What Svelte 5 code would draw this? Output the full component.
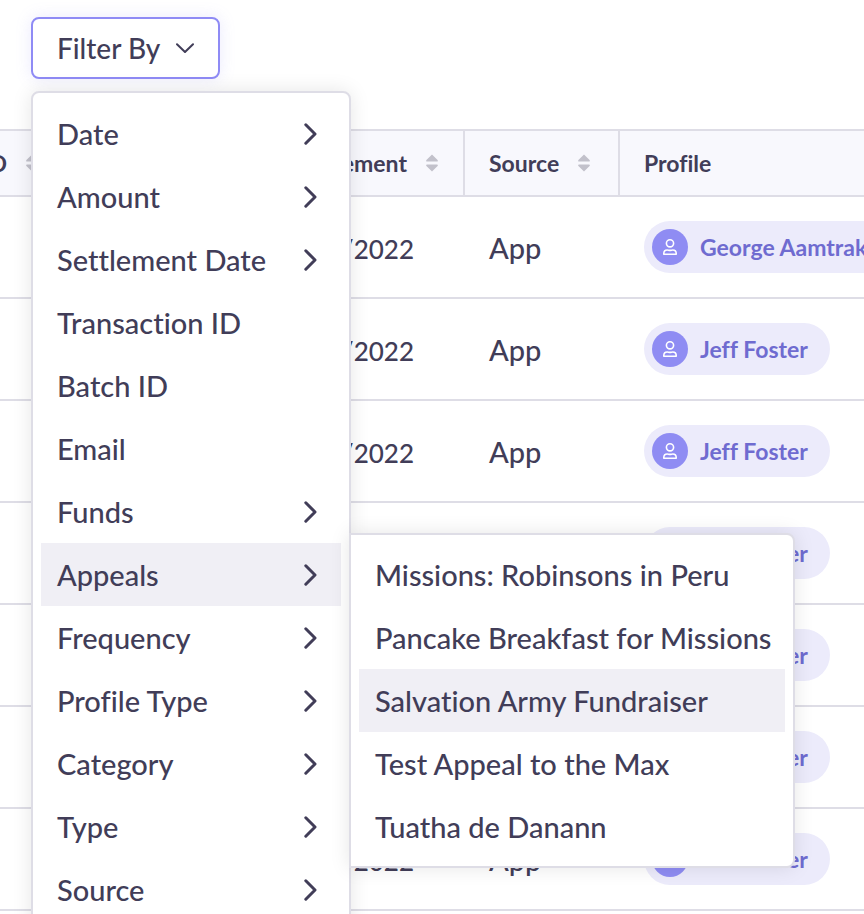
<script lang="ts">
  interface FilterItem {
    label: string
    options?: string[]
    nested?: boolean
  }

  const filters: FilterItem[] = [
    { label: 'Date', nested: true },
    { label: 'Amount', nested: true },
    { label: 'Settlement Date', nested: true },
    { label: 'Transaction ID' },
    { label: 'Batch ID' },
    { label: 'Email' },
    { label: 'Funds', nested: true },
    {
      label: 'Appeals',
      nested: true,
      options: [
        'Missions: Robinsons in Peru',
        'Pancake Breakfast for Missions',
        'Salvation Army Fundraiser',
        'Test Appeal to the Max',
        'Tuatha de Danann'
      ]
    },
    { label: 'Frequency', nested: true },
    { label: 'Profile Type', nested: true },
    { label: 'Category', nested: true },
    { label: 'Type', nested: true },
    { label: 'Source', nested: true }
  ]

  const rows = ['George Aamtrak', ...Array(6).fill('Jeff Foster')].map(profile => ({
    settled: '12/9/2022',
    source: 'App',
    profile
  }))

  let open = $state(true)
  let activeFilter = $state('Appeals')
  let activeOption = $state('Salvation Army Fundraiser')
</script>

{#snippet sortButton(label: string)}
  <button class="sort" type="button">
    {label}
    <svg width="14" height="18" viewBox="0 0 14 18" aria-hidden="true">
      <path d="M7 .5 12.6 6q1 1.5-.6 1.5H2Q.4 7.500 1.400 6ZM7 17.500 1.400 12Q.4 10.500 2 10.500h10q1.600 0 .6 1.500Z" />
    </svg>
  </button>
{/snippet}

<main class="page">
  <div class="toolbar">
    <div class="filter">
      <button
        class="filter-btn"
        type="button"
        aria-haspopup="menu"
        aria-expanded={open}
        onclick={() => (open = !open)}
      >
        Filter By
        <svg width="18" height="10" viewBox="0 0 18 10" aria-hidden="true">
          <path d="m1 1.200 8 7.800 8-7.800" />
        </svg>
      </button>

      {#if open}
        <ul class="menu">
          {#each filters as item (item.label)}
            <li>
              <button
                class="menu-item"
                class:active={item.label === activeFilter}
                type="button"
                onclick={() => (activeFilter = item.label)}
              >
                {item.label}
                {#if item.nested}
                  <svg width="14" height="22" viewBox="0 0 14 22" aria-hidden="true">
                    <path d="m2.800 1.800 9.200 9.200-9.200 9.200" />
                  </svg>
                {/if}
              </button>
              {#if item.options && item.label === activeFilter}
                <ul class="menu submenu">
                  {#each item.options as option (option)}
                    <li>
                      <button
                        class="menu-item"
                        class:active={option === activeOption}
                        type="button"
                        onclick={() => (activeOption = option)}
                      >
                        {option}
                      </button>
                    </li>
                  {/each}
                </ul>
              {/if}
            </li>
          {/each}
        </ul>
      {/if}
    </div>
  </div>

  <div class="table-wrap">
    <table>
      <thead>
        <tr>
          <th class="id">{@render sortButton('ID')}</th>
          <th class="settled">{@render sortButton('Settlement')}</th>
          <th class="source">{@render sortButton('Source')}</th>
          <th>Profile</th>
        </tr>
      </thead>
      <tbody>
        {#each rows as row}
          <tr>
            <td></td>
            <td class="settled">{row.settled}</td>
            <td>{row.source}</td>
            <td>
              <a class="pill" href="#profile">
                <span class="avatar">
                  <svg width="16" height="18" viewBox="0 0 16 18" aria-hidden="true">
                    <circle cx="8" cy="5.300" r="3.600" />
                    <path d="M1.800 16.200v-.6c0-2.200 1.300-3.600 3.400-3.600.9 0 1.500.4 2.800.4s1.900-.4 2.800-.4c2.100 0 3.400 1.400 3.400 3.600v.6Z" />
                  </svg>
                </span>
                {row.profile}
              </a>
            </td>
          </tr>
        {/each}
      </tbody>
    </table>
  </div>
</main>

<style>
  :global(body) {
    margin: 0;
    background: #fff;
  }

  .page {
    height: 100vh;
    overflow: hidden;
    color: #413d58;
    font-family: Lato, 'Liberation Sans', sans-serif;
    font-size: 29px;
    font-weight: 500;
    font-variant-ligatures: none;
  }

  button {
    border: none;
    background: none;
    color: inherit;
    font: inherit;
    font-variant-ligatures: none;
    cursor: pointer;
  }

  svg {
    flex-shrink: 0;
    fill: none;
    stroke: currentColor;
    stroke-linecap: round;
    stroke-linejoin: round;
  }

  .toolbar {
    padding: 17px 31px 50px;
  }

  .filter {
    position: relative;
    display: inline-flex;
  }

  .filter-btn {
    display: flex;
    align-items: center;
    gap: 16px;
    height: 62px;
    padding: 0 24px;
    border: 2px solid #8f8bf5;
    border-radius: 8px;
    background: #fff;
    box-shadow: 0 0 16px rgba(143, 139, 245, 0.18);
    font-size: 28px;
  }

  .filter-btn svg {
    stroke-width: 2;
  }

  .menu {
    position: absolute;
    top: calc(100% + 12px);
    left: 0;
    z-index: 10;
    box-sizing: border-box;
    width: 320px;
    margin: 0;
    padding: 9px 8px;
    border: 2px solid #dedde6;
    border-radius: 8px;
    background: #fff;
    box-shadow: 0 0 20px rgba(0, 0, 0, 0.1);
    list-style: none;
  }

  .menu li {
    position: relative;
  }

  .menu-item {
    display: flex;
    align-items: center;
    justify-content: space-between;
    width: 100%;
    height: 63px;
    padding: 0 24px 0 16px;
    text-align: left;
    white-space: nowrap;
  }

  .menu-item.active {
    background: #f0eff5;
  }

  .menu-item svg {
    stroke-width: 3;
  }

  .submenu {
    top: -10px;
    left: calc(100% + 8px);
    width: 446px;
    padding: 8px;
    border-radius: 0 8px 8px 0;
  }

  .table-wrap {
    overflow: hidden;
  }

  /* the table sits scrolled to the right inside its wrapper */
  table {
    width: calc(100% + 240px);
    margin-left: -80px;
    border-collapse: separate;
    border-spacing: 0;
    border-top: 2px solid #dedde6;
    table-layout: fixed;
  }

  th,
  td {
    box-sizing: border-box;
    padding: 0 24px;
    border-bottom: 2px solid #dedde6;
    text-align: left;
    white-space: nowrap;
  }

  th {
    height: 66px;
    border-right: 2px solid #dedde6;
    background: #f8f8fd;
    font-size: 23px;
    font-weight: 700;
  }

  td {
    height: 102px;
  }

  .id {
    width: 145px;
  }

  th.settled {
    width: 400px;
  }

  .source {
    width: 155px;
  }

  .id .sort,
  .settled .sort {
    margin-left: auto;
  }

  td.settled {
    padding-top: 4px;
    padding-right: 51px;
    font-size: 26px;
    text-align: right;
  }

  .sort {
    display: flex;
    align-items: center;
    gap: 18px;
    padding: 0;
  }

  .sort svg {
    fill: #c2c1cb;
    stroke: none;
  }

  .pill {
    display: inline-flex;
    align-items: center;
    gap: 12px;
    height: 52px;
    padding: 0 22px 0 8px;
    border-radius: 26px;
    background: #ecebfb;
    color: #6f6bd0;
    font-size: 23px;
    font-weight: 700;
    text-decoration: none;
    vertical-align: middle;
  }

  .avatar {
    display: flex;
    align-items: center;
    justify-content: center;
    width: 36px;
    height: 36px;
    border-radius: 50%;
    background: #8f8cf3;
    color: #fff;
  }

  .avatar svg {
    stroke-width: 1.6;
  }
</style>
